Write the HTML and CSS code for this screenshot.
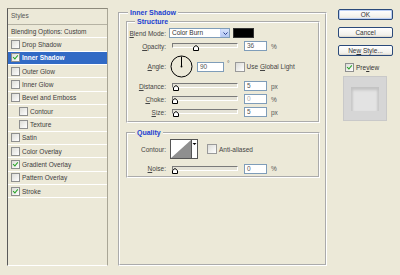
FILE: index.html
```html
<!DOCTYPE html>
<html lang="en">
<head>
    <meta charset="UTF-8">
    <title>Layer Style</title>
    <link rel="stylesheet" href="styles.css">
</head>
<body>
<div class="dialog">
    <div class="styles-list">
        <div class="list-head">Styles</div>
        <div class="list-row">Blending Options: Custom</div>
        <div class="list-row"><span class="cb"></span>Drop Shadow</div>
        <div class="list-row selected"><span class="cb checked"></span>Inner Shadow</div>
        <div class="list-row"><span class="cb"></span>Outer Glow</div>
        <div class="list-row"><span class="cb"></span>Inner Glow</div>
        <div class="list-row"><span class="cb"></span>Bevel and Emboss</div>
        <div class="list-row sub"><span class="cb"></span>Contour</div>
        <div class="list-row sub"><span class="cb"></span>Texture</div>
        <div class="list-row"><span class="cb"></span>Satin</div>
        <div class="list-row"><span class="cb"></span>Color Overlay</div>
        <div class="list-row"><span class="cb checked"></span>Gradient Overlay</div>
        <div class="list-row"><span class="cb"></span>Pattern Overlay</div>
        <div class="list-row"><span class="cb checked"></span>Stroke</div>
    </div>

    <div class="main">
        <fieldset class="group outer">
            <legend>Inner Shadow</legend>

            <fieldset class="group structure">
                <legend>Structure</legend>
                <div class="row first">
                    <span class="label"><u>B</u>lend Mode:</span>
                    <div class="select">
                        <span class="select-text">Color Burn</span>
                        <span class="select-btn">
                            <svg width="5" height="3" viewBox="0 0 5 3"><path d="M0.5 0.5L2.5 2.5L4.5 0.5" fill="none" stroke="#2a3f8f" stroke-width="1"/></svg>
                        </span>
                    </div>
                    <span class="swatch"></span>
                </div>
                <div class="row">
                    <span class="label"><u>O</u>pacity:</span>
                    <div class="slider">
                        <div class="track"></div>
                        <svg class="thumb" style="left:32%" width="6" height="6" viewBox="0 0 6 6"><path d="M0.5 5.5V2.5L3 0.5L5.5 2.5V5.5Z" fill="#fff" stroke="#000"/></svg>
                    </div>
                    <span class="field">36</span>
                    <span class="unit">%</span>
                </div>
                <div class="row angle-row">
                    <span class="label"><u>A</u>ngle:</span>
                    <svg class="dial" width="23" height="23" viewBox="0 0 23 23">
                        <circle cx="11.5" cy="11.5" r="10.5" fill="none" stroke="#000" stroke-width="1"/>
                        <line x1="11.5" y1="11.5" x2="11.5" y2="1.5" stroke="#000" stroke-width="1"/>
                        <circle cx="11.5" cy="11.5" r="0.9" fill="#000"/>
                    </svg>
                    <span class="field wide">90</span>
                    <span class="degree">°</span>
                    <span class="cb light"></span>
                    <span class="check-text">Use <u>G</u>lobal Light</span>
                </div>
                <div class="row">
                    <span class="label"><u>D</u>istance:</span>
                    <div class="slider">
                        <div class="track"></div>
                        <svg class="thumb" style="left:2%" width="6" height="6" viewBox="0 0 6 6"><path d="M0.5 5.5V2.5L3 0.5L5.5 2.5V5.5Z" fill="#fff" stroke="#000"/></svg>
                    </div>
                    <span class="field">5</span>
                    <span class="unit">px</span>
                </div>
                <div class="row">
                    <span class="label"><u>C</u>hoke:</span>
                    <div class="slider">
                        <div class="track"></div>
                        <svg class="thumb" style="left:0%" width="6" height="6" viewBox="0 0 6 6"><path d="M0.5 5.5V2.5L3 0.5L5.5 2.5V5.5Z" fill="#fff" stroke="#000"/></svg>
                    </div>
                    <span class="field dim">0</span>
                    <span class="unit">%</span>
                </div>
                <div class="row">
                    <span class="label"><u>S</u>ize:</span>
                    <div class="slider">
                        <div class="track"></div>
                        <svg class="thumb" style="left:2%" width="6" height="6" viewBox="0 0 6 6"><path d="M0.5 5.5V2.5L3 0.5L5.5 2.5V5.5Z" fill="#fff" stroke="#000"/></svg>
                    </div>
                    <span class="field">5</span>
                    <span class="unit">px</span>
                </div>
            </fieldset>

            <fieldset class="group quality">
                <legend>Quality</legend>
                <div class="row contour-row">
                    <span class="label">Contour:</span>
                    <svg class="contour" width="28" height="20" viewBox="0 0 28 20">
                        <rect x="0.5" y="0.5" width="27" height="19" fill="#fff" stroke="#555"/>
                        <path d="M1 19L21 1V19Z" fill="#8f8f8f"/>
                        <line x1="21.5" y1="0.5" x2="21.5" y2="19.5" stroke="#555"/>
                        <path d="M23 4L25 6L27 4Z" fill="#000" transform="translate(-0.5 0)"/>
                    </svg>
                    <span class="cb light aa"></span>
                    <span class="check-text">Anti-aliased</span>
                </div>
                <div class="row noise-row">
                    <span class="label"><u>N</u>oise:</span>
                    <div class="slider">
                        <div class="track"></div>
                        <svg class="thumb" style="left:0%" width="6" height="6" viewBox="0 0 6 6"><path d="M0.5 5.5V2.5L3 0.5L5.5 2.5V5.5Z" fill="#fff" stroke="#000"/></svg>
                    </div>
                    <span class="field">0</span>
                    <span class="unit">%</span>
                </div>
            </fieldset>
        </fieldset>
    </div>

    <div class="side">
        <div class="btn default">OK</div>
        <div class="btn">Cancel</div>
        <div class="btn">Ne<u>w</u> Style...</div>
        <div class="preview-check"><span class="cb checked"></span>Pre<u>v</u>iew</div>
        <div class="preview-box">
            <div class="preview-shape"></div>
        </div>
    </div>
</div>
</body>
</html>
```

FILE: styles.css
```css
body {
    margin: 0;
    background-color: #ece9d8;
    font-family: "Liberation Sans", Arial, sans-serif;
    font-size: 6.5px;
    color: #3c3c3c;
}
.dialog {
    display: flex;
    height: 275px;
    box-sizing: border-box;
    padding: 8px 0 9px 7px;
}

/* styles list on the left */
.styles-list {
    width: 101px;
    box-sizing: border-box;
    border: 1px solid;
    border-color: #8d8a7c #a9a696 #fff #5a5a5a;
}
.list-head {
    height: 15px;
    line-height: 14px;
    padding-left: 3px;
    border-bottom: 1px solid #b5b2a3;
    color: #555;
}
.list-row {
    height: 12.33px;
    border-bottom: 1px solid #fff;
    display: flex;
    align-items: center;
    padding-left: 3px;
    white-space: nowrap;
}
.list-row.sub {
    padding-left: 11px;
}
.list-row.selected {
    background-color: #316ac5;
    color: #fff;
    font-weight: bold;
}
.cb {
    position: relative;
    flex: none;
    width: 7px;
    height: 7px;
    margin-right: 2px;
    border: 1px solid #8e8f8f;
    background: linear-gradient(135deg, #dcdcd7, #fff);
}
.cb.checked::after {
    content: "";
    position: absolute;
    left: 2px;
    top: 0;
    width: 1.5px;
    height: 4px;
    border: solid #21a121;
    border-width: 0 1.5px 1.5px 0;
    transform: rotate(40deg);
}

/* middle panel */
.main {
    width: 209px;
    margin: 1px 0 0 10px;
    display: flex;
    flex-direction: column;
}
.group {
    margin: 0;
    padding: 0;
    min-width: 0;
    border: 2px groove #fff;
}
.group legend {
    font-size: 7px;
    line-height: 8px;
    font-weight: bold;
    color: #1a3fd1;
    padding: 0 2px;
    margin-left: 7px;
}
.outer {
    flex: 1;
    padding: 0 5px 0 6px;
}
.outer > legend {
    margin-left: 2px;
}
.structure {
    margin-top: 1px;
    padding: 2px 0 4px;
}
.quality {
    margin-top: 6px;
    padding: 2px 0 2px;
}
.row {
    display: flex;
    align-items: center;
    height: 10px;
    margin-top: 3px;
    white-space: nowrap;
}
.row.first {
    margin-top: 0;
}
.angle-row {
    height: 23px;
    margin-top: 4px;
    margin-bottom: 1px;
}
.contour-row {
    height: 20px;
    margin-top: 0;
}
.noise-row {
    height: 11px;
    margin-top: 4px;
}
.label {
    width: 38px;
    text-align: right;
    color: #444;
}
.select {
    display: flex;
    width: 61px;
    height: 10px;
    box-sizing: border-box;
    margin-left: 3px;
    border: 1px solid #7f9db9;
    background-color: #fff;
}
.select-text {
    flex: 1;
    padding-left: 2px;
    line-height: 8px;
    color: #333;
}
.select-btn {
    width: 8px;
    display: flex;
    align-items: center;
    justify-content: center;
    background: linear-gradient(#d6e2fb, #b3c7f2);
    border-left: 1px solid #c3d3fd;
}
.swatch {
    width: 21px;
    height: 10px;
    margin-left: 3px;
    box-sizing: border-box;
    background-color: #000;
    border: 1px solid #333;
}
.slider {
    position: relative;
    width: 66px;
    height: 10px;
    margin-left: 6px;
}
.track {
    margin-top: 2px;
    height: 3px;
    border: 1px solid;
    border-color: #7a7a7a #fff #fff #7a7a7a;
    background-color: #e4e2d6;
}
.thumb {
    position: absolute;
    top: 4px;
}
.field {
    width: 23px;
    height: 10px;
    box-sizing: border-box;
    margin-left: 6px;
    padding-left: 2px;
    line-height: 8px;
    border: 1px solid #7f9db9;
    background-color: #fff;
    color: #555;
}
.field.dim {
    color: #aaa;
}
.field.wide {
    width: 27px;
    margin-left: 4px;
}
.unit {
    margin-left: 4px;
    color: #555;
}
.dial {
    margin-left: 4px;
}
.degree {
    margin-left: 3px;
    align-self: flex-start;
    margin-top: 5px;
    color: #555;
}
.cb.light {
    margin-left: 5px;
    width: 8px;
    height: 8px;
    border-color: #9a9a9a;
}
.cb.aa {
    margin-left: 9px;
}
.check-text {
    color: #444;
}
.contour {
    margin-left: 4px;
}

/* buttons on the right */
.side {
    width: 55px;
    margin: 1px 0 0 11px;
    display: flex;
    flex-direction: column;
}
.btn {
    height: 11px;
    box-sizing: border-box;
    margin-bottom: 7px;
    border: 1px solid #2b4a7a;
    border-radius: 2px;
    background: linear-gradient(#fff, #f1f0ea 80%, #d8d4c8);
    text-align: center;
    line-height: 9px;
    color: #333;
}
.btn.default {
    box-shadow: inset 0 0 0 1px #bcd0f5;
}
.preview-check {
    display: flex;
    align-items: center;
    height: 8px;
    margin-left: 7px;
    color: #333;
}
.preview-box {
    width: 44px;
    height: 45px;
    margin: 5px 0 0 5px;
    box-sizing: border-box;
    border: 1px solid #c9c9c9;
    background-color: #d6d6d6;
    display: flex;
    align-items: center;
    justify-content: center;
}
.preview-shape {
    width: 28px;
    height: 24px;
    background-color: #e3e3e3;
    box-shadow: inset 0 4px 3px -1px #c2c2c2, inset 3px 0 2px -1px #cacaca, inset -3px 0 2px -1px #cacaca;
}
```
